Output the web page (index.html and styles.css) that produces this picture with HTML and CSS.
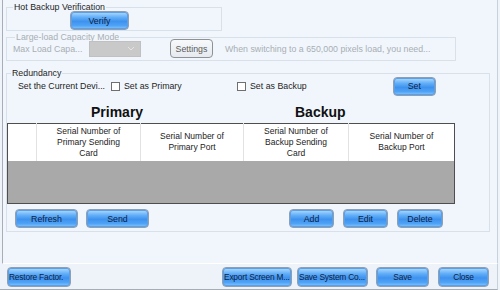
FILE: index.html
```html
<!DOCTYPE html>
<html lang="en">
  <head>
    <meta charset="UTF-8" />
    <title>Redundancy</title>
    <link rel="stylesheet" href="styles.css">
  </head>
  <body>
    <div class="window">
      <div class="main">
        <!-- Hot backup -->
        <div class="group hot">
          <div class="group-title">Hot Backup Verification</div>
          <div class="group-row">
            <button class="btn verify">Verify</button>
          </div>
        </div>

        <!-- Large-load (disabled) -->
        <div class="group load">
          <div class="group-title muted">Large-load Capacity Mode</div>
          <div class="group-row">
            <span class="load-label">Max Load Capa...</span>
            <span class="select">
              <svg width="8" height="5" viewBox="0 0 8 5"><path d="M1 1l3 3 3-3" fill="none" stroke="#e4e4e4" stroke-width="1"/></svg>
            </span>
            <button class="btn-gray">Settings</button>
            <span class="load-note">When switching to a 650,000 pixels load, you need...</span>
          </div>
        </div>

        <!-- Redundancy -->
        <div class="group redundancy">
          <div class="group-title">Redundancy</div>
          <div class="set-row">
            <span class="set-label">Set the Current Devi...</span>
            <label class="check primary-check"><span class="box"></span>Set as Primary</label>
            <label class="check backup-check"><span class="box"></span>Set as Backup</label>
            <button class="btn set">Set</button>
          </div>
          <div class="titles">
            <span class="title-primary">Primary</span>
            <span class="title-backup">Backup</span>
          </div>
          <table class="grid">
            <thead>
              <tr>
                <th class="c0"></th>
                <th class="c1">Serial Number of<br>Primary Sending<br>Card</th>
                <th class="c2">Serial Number of<br>Primary Port</th>
                <th class="c3">Serial Number of<br>Backup Sending<br>Card</th>
                <th class="c4">Serial Number of<br>Backup Port</th>
              </tr>
            </thead>
            <tbody>
              <tr><td colspan="5"></td></tr>
            </tbody>
          </table>
          <div class="table-actions">
            <div class="actions-left">
              <button class="btn w63">Refresh</button>
              <button class="btn w63">Send</button>
            </div>
            <div class="actions-right">
              <button class="btn add">Add</button>
              <button class="btn edit">Edit</button>
              <button class="btn delete">Delete</button>
            </div>
          </div>
        </div>
      </div>

      <!-- Footer buttons -->
      <div class="footer">
        <button class="btn foot restore">Restore Factor.</button>
        <div class="footer-right">
          <button class="btn foot export">Export Screen M...</button>
          <button class="btn foot savesys">Save System Co...</button>
          <button class="btn foot save">Save</button>
          <button class="btn foot close">Close</button>
        </div>
      </div>
    </div>
  </body>
</html>
```

FILE: styles.css
```css
* {
  box-sizing: border-box;
}

body {
  margin: 0;
  font-family: "Liberation Sans", Arial, sans-serif;
  font-size: 8.8px;
  color: #1e1e1e;
  background: #eef4fa;
}

.window {
  width: 500px;
  height: 290px;
  display: flex;
  flex-direction: column;
}

.main {
  margin-left: 2px;
  width: 496px;
  height: 264px;
  border-left: 1px solid #a8aeb6;
  border-right: 1px solid #c9d1da;
  border-bottom: 1px solid #ffffff;
  background: #f0f6fc;
  display: flex;
  flex-direction: column;
}

/* group boxes */
.group {
  margin-left: 3px;
  border: 1px solid #d8e1ea;
}

.group-title {
  display: table;
  height: 11px;
  line-height: 11px;
  margin-top: -6px;
  padding: 0 1px;
  background: #f0f6fc;
  color: #1e1e1e;
}

.group-title.muted {
  color: #a9aeb4;
}

.group-row {
  display: flex;
  align-items: center;
}

.hot {
  margin-top: 7px;
  width: 216px;
  height: 24px;
}

.hot .group-title {
  margin-left: 6px;
}

.hot .group-row {
  margin-top: -2px;
}

.verify {
  margin-left: 63px;
  width: 59px;
  height: 16px;
}

.load {
  margin-top: 6px;
  width: 450px;
  height: 24px;
}

.load .group-title {
  margin-left: 8px;
}

.load .group-row {
  margin-top: -4px;
  height: 19px;
}

.load-label {
  margin-left: 6px;
  width: 76px;
  color: #a9aeb4;
}

.select {
  width: 52px;
  height: 16px;
  background: #c9c9c9;
  border: 1px solid #c0c0c0;
  display: flex;
  align-items: center;
  justify-content: flex-end;
  padding-right: 5px;
}

.btn-gray {
  margin-left: 29px;
  width: 43px;
  height: 19px;
  padding: 0;
  font: inherit;
  color: #5a5a5a;
  background: linear-gradient(#f7f9fb, #e6eaee);
  border: 1px solid #8e9296;
  border-radius: 4px;
}

.load-note {
  margin-left: 12px;
  color: #a9aeb4;
}

.redundancy {
  margin-top: 12px;
  width: 484px;
  height: 159px;
}

.redundancy .group-title {
  margin-left: 4px;
}

.set-row {
  display: flex;
  align-items: center;
  height: 18px;
  margin-top: -2px;
}

.set-label {
  margin-left: 11px;
  width: 93px;
}

.check {
  display: flex;
  align-items: center;
}

.box {
  width: 9px;
  height: 9px;
  background: #fff;
  border: 1px solid #6f6f6f;
  margin-right: 4px;
}

.primary-check {
  width: 126px;
}

.set {
  margin-left: 86px;
  width: 43px;
  height: 18px;
}

.titles {
  display: flex;
  height: 16px;
  line-height: 16px;
  margin-top: 9px;
  font-size: 14px;
  font-weight: bold;
  color: #111;
}

.title-primary {
  margin-left: 84px;
  width: 204px;
}

.title-backup {
  width: 60px;
}

/* table */
.grid {
  margin-top: 3px;
  width: 448px;
  border-collapse: collapse;
  border: 1px solid #4e4e4e;
  table-layout: fixed;
}

.grid th {
  height: 37px;
  padding: 0 4px;
  background: #fff;
  border-left: 1px solid #e2e2e2;
  font-weight: normal;
  font-size: 8.5px;
  line-height: 11px;
  color: #222;
  text-align: center;
  white-space: nowrap;
}

.grid th.c0 {
  border-left: none;
}

.c0 { width: 29px; }
.c1 { width: 104px; }
.c2 { width: 103px; }
.c3 { width: 105px; }

.grid td {
  height: 43px;
  background: #a9a9a9;
  padding: 0;
}

.table-actions {
  display: flex;
  margin-top: 5px;
}

.actions-left {
  display: flex;
  gap: 8px;
  margin-left: 8px;
  width: 274px;
}

.actions-right {
  display: flex;
  gap: 9px;
}

/* blue buttons */
.btn {
  height: 19px;
  padding: 0;
  font: inherit;
  color: #0e1f45;
  border: 1px solid #8f9fb2;
  border-radius: 4px;
  background: linear-gradient(#b4dcff 0%, #64b0f8 30%, #3e92ef 55%, #4ea3f6 80%, #86c6ff 100%);
  box-shadow: inset 0 0 0 1px #5d9fe6;
  cursor: pointer;
}

.w63 { width: 63px; }
.add { width: 45px; }
.edit { width: 45px; }
.delete { width: 46px; }

/* footer */
.footer {
  display: flex;
  align-items: center;
  height: 26px;
  padding-left: 7px;
  border-right: 1px solid #c9d1da;
  border-bottom: 1px solid #a7adb4;
  width: 498px;
  background: #edf3f9;
}

.foot {
  height: 20px;
  white-space: nowrap;
  overflow: hidden;
  font-size: 8.4px;
  letter-spacing: -0.2px;
}

.restore {
  width: 64px;
  text-align: left;
  padding-left: 1px;
}

.footer-right {
  display: flex;
  margin-left: 151px;
}

.export { width: 70px; text-align: left; padding-left: 1px; }
.savesys { width: 71px; margin-left: 5px; text-align: left; padding-left: 1px; }
.save { width: 53px; margin-left: 8px; }
.close { width: 51px; margin-left: 9px; }
```
